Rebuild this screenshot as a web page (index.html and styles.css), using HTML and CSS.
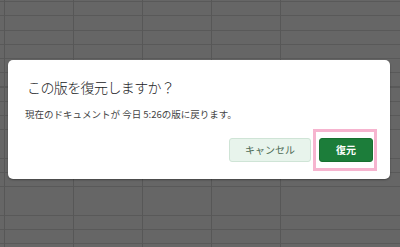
FILE: index.html
```html
<!DOCTYPE html>
<html lang="ja">
<head>
<meta charset="utf-8">
<link rel="stylesheet" href="styles.css">
</head>
<body>
<div class="sheet">
  <div class="dialog">
    <h1 class="title">この版を復元しますか？</h1>
    <p class="message">現在のドキュメントが 今日 5:26の版に戻ります。</p>
    <div class="actions">
      <button class="btn btn-cancel">キャンセル</button>
      <div class="highlight-wrap">
        <button class="btn btn-restore">復元</button>
        <span class="highlight"></span>
      </div>
    </div>
  </div>
</div>
</body>
</html>
```
FILE: styles.css
```css
html, body {
  margin: 0;
  padding: 0;
}
body {
  width: 400px;
  height: 247px;
  overflow: hidden;
  font-family: "Noto Sans CJK JP", "Noto Sans", sans-serif;
}
.sheet {
  width: 400px;
  height: 247px;
  box-sizing: border-box;
  padding: 60px 0 0 8px;
  background-color: #666666;
  background-image:
    repeating-linear-gradient(to right, transparent 0, transparent 4px, #575757 4px, #575757 5px, transparent 5px, transparent 69.1px),
    repeating-linear-gradient(to bottom, transparent 0, transparent 1px, #595959 1px, #595959 2px, transparent 2px, transparent 14.25px);
}
.dialog {
  width: 382px;
  height: 119px;
  box-sizing: border-box;
  background: #ffffff;
  border-radius: 5px;
  box-shadow: 0 1px 2px rgba(0, 0, 0, 0.35);
  padding: 17px 17px 0 19px;
  display: flex;
  flex-direction: column;
}
.title {
  margin: 0;
  font-size: 14px;
  line-height: 20px;
  font-weight: 300;
  color: #202124;
  letter-spacing: -0.6px;
}
.message {
  margin: 10px 0 0 -2px;
  font-size: 9.5px;
  line-height: 14px;
  color: #444444;
}
.actions {
  margin-top: 17px;
  display: flex;
  justify-content: flex-end;
  gap: 8px;
}
.btn {
  height: 24px;
  box-sizing: border-box;
  border-radius: 3px;
  font-family: "Noto Sans CJK JP", "Noto Sans", sans-serif;
  font-size: 10px;
  line-height: 1;
  padding: 0;
  cursor: pointer;
}
.btn-cancel {
  width: 82px;
  background: #e8f4ec;
  border: 1px solid #cfe4d6;
  color: #4d6b55;
}
.highlight-wrap {
  position: relative;
  display: flex;
}
.btn-restore {
  width: 54px;
  background: #1c7d3a;
  border: 1px solid #17702f;
  color: #ffffff;
  font-weight: 700;
}
.highlight {
  position: absolute;
  top: -9px;
  left: -6px;
  right: -4px;
  bottom: -9px;
  border: 3px solid #f6b4cf;
  pointer-events: none;
}
```
